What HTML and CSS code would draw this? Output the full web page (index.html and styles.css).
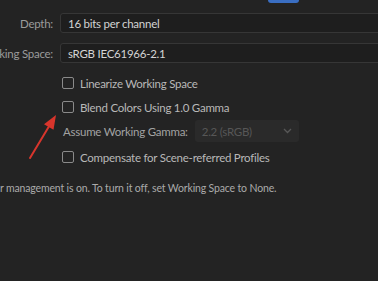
FILE: index.html
```html
<!DOCTYPE html>
<html lang="en">
<head>
<meta charset="UTF-8" />
<meta name="viewport" content="width=device-width, initial-scale=1" />
<title>Color Settings</title>
<link rel="stylesheet" href="styles.css">
</head>
<body>

  <div class="top-strip">
    <div class="btn-edge"></div>
  </div>

  <div class="settings">
    <div class="label">Depth:</div>
    <div class="field">16 bits per channel</div>
    <div class="label">Working Space:</div>
    <div class="field">sRGB IEC61966-2.1</div>
  </div>

  <div class="options">
    <label class="option"><span class="box"></span>Linearize Working Space</label>
    <label class="option"><span class="box"></span>Blend Colors Using 1.0 Gamma</label>
    <div class="option gamma">
      <span class="gamma-label">Assume Working Gamma:</span>
      <div class="select disabled">
        <span>2.2 (sRGB)</span>
        <svg class="chevron" width="9" height="6" viewBox="0 0 9 6"><path d="M1 1 L4.5 4.5 L8 1" fill="none" stroke="currentColor" stroke-width="1.3"/></svg>
      </div>
    </div>
    <label class="option last"><span class="box"></span>Compensate for Scene-referred Profiles</label>
  </div>

  <p class="info">r management is on. To turn it off, set Working Space to None.</p>

  <!-- annotation arrow -->
  <svg class="arrow" width="36" height="52" viewBox="0 0 36 52">
    <line x1="4" y1="46" x2="25" y2="11" stroke="#d8352c" stroke-width="2" stroke-linecap="round"/>
    <polygon points="30,3 27.5,17.8 18,12.2" fill="#d8352c"/>
  </svg>

</body>
</html>
```

FILE: styles.css
```css
body {
  margin: 0;
  width: 378px;
  height: 281px;
  overflow: hidden;
  position: relative;
  background: #232323;
  font-family: Lato, "Liberation Sans", sans-serif;
  font-size: 11.5px;
  letter-spacing: -0.25px;
  color: #b6b6b6;
}
.top-strip {
  height: 3px;
}
.btn-edge {
  margin-left: 268px;
  width: 31px;
  height: 3px;
  background: #3a6ec2;
  border-radius: 0 0 3px 3px;
}
.settings {
  display: grid;
  grid-template-columns: 53px 340px;
  column-gap: 7px;
  row-gap: 10px;
  padding-top: 10px;
}
.label {
  display: flex;
  justify-content: flex-end;
  align-items: center;
  white-space: nowrap;
  color: #9b9b9b;
}
.field {
  box-sizing: border-box;
  height: 20px;
  display: flex;
  align-items: center;
  padding-left: 7px;
  border: 1px solid #363636;
  border-radius: 3px;
  background: #1e1e1e;
  color: #d4d4d4;
  white-space: nowrap;
}
.options {
  margin-top: 8px;
  padding-left: 62px;
}
.option {
  display: flex;
  align-items: center;
  height: 24px;
  white-space: nowrap;
  color: #b8b8b8;
}
.option.last {
  margin-top: 2px;
}
.box {
  box-sizing: border-box;
  width: 12px;
  height: 12px;
  border: 1.5px solid #8a8a8a;
  border-radius: 2px;
  margin-right: 6px;
}
.gamma-label {
  margin-left: 1px;
  color: #a2a2a2;
}
.select {
  box-sizing: border-box;
  width: 104px;
  height: 22px;
  margin-left: 7px;
  padding: 0 7px;
  display: flex;
  align-items: center;
  justify-content: space-between;
  background: #2a2a2a;
  border-radius: 3px;
}
.select.disabled {
  color: #575757;
}
.info {
  margin: 11px 0 0;
  line-height: 16px;
  font-size: 10.5px;
  letter-spacing: -0.15px;
  white-space: nowrap;
  color: #aaaaaa;
}
.arrow {
  position: absolute;
  left: 26px;
  top: 112px;
}
```
